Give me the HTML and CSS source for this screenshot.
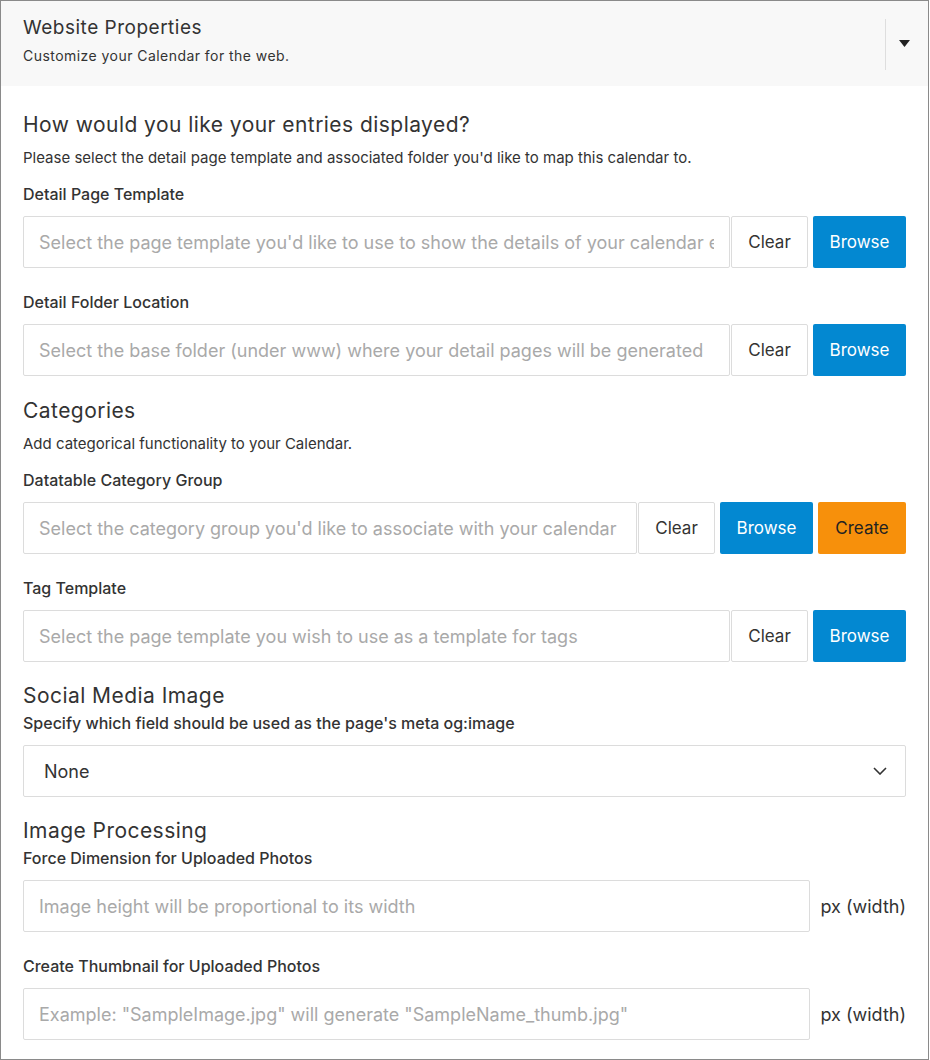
FILE: index.html
```html
<!DOCTYPE html>
<html>
<head>
<meta charset="utf-8">
<link rel="stylesheet" href="styles.css">
</head>
<body>
<div class="panel">
  <div class="panel-header">
    <div class="header-text">
      <div class="header-title">Website Properties</div>
      <div class="header-sub">Customize your Calendar for the web.</div>
    </div>
    <div class="header-toggle">
      <svg width="11" height="7" viewBox="0 0 11 7"><polygon points="0,0 11,0 5.5,7" fill="#222"/></svg>
    </div>
  </div>

  <div class="panel-body">
    <h2 class="section-title first">How would you like your entries displayed?</h2>
    <p class="section-desc">Please select the detail page template and associated folder you'd like to map this calendar to.</p>

    <label class="field-label">Detail Page Template</label>
    <div class="input-group">
      <div class="text-input placeholder"><span class="input-text">Select the page template you'd like to use to show the details of your calendar entries</span></div>
      <button class="btn btn-clear">Clear</button>
      <button class="btn btn-browse">Browse</button>
    </div>

    <label class="field-label spaced">Detail Folder Location</label>
    <div class="input-group">
      <div class="text-input placeholder"><span class="input-text">Select the base folder (under www) where your detail pages will be generated</span></div>
      <button class="btn btn-clear">Clear</button>
      <button class="btn btn-browse">Browse</button>
    </div>

    <h2 class="section-title mid">Categories</h2>
    <p class="section-desc">Add categorical functionality to your Calendar.</p>

    <label class="field-label">Datatable Category Group</label>
    <div class="input-group">
      <div class="text-input placeholder"><span class="input-text">Select the category group you'd like to associate with your calendar</span></div>
      <button class="btn btn-clear">Clear</button>
      <button class="btn btn-browse">Browse</button>
      <button class="btn btn-create">Create</button>
    </div>

    <label class="field-label spaced">Tag Template</label>
    <div class="input-group">
      <div class="text-input placeholder"><span class="input-text">Select the page template you wish to use as a template for tags</span></div>
      <button class="btn btn-clear">Clear</button>
      <button class="btn btn-browse">Browse</button>
    </div>

    <h2 class="section-title">Social Media Image</h2>
    <label class="field-label tight">Specify which field should be used as the page's meta og:image</label>
    <div class="select-box">
      <span>None</span>
      <svg width="14" height="8" viewBox="0 0 14 8"><polyline points="1,1 7,7 13,1" fill="none" stroke="#333" stroke-width="1.6"/></svg>
    </div>

    <h2 class="section-title sm">Image Processing</h2>
    <label class="field-label tight">Force Dimension for Uploaded Photos</label>
    <div class="input-group">
      <div class="text-input placeholder"><span class="input-text">Image height will be proportional to its width</span></div>
      <span class="unit">px (width)</span>
    </div>

    <label class="field-label spaced">Create Thumbnail for Uploaded Photos</label>
    <div class="input-group">
      <div class="text-input placeholder"><span class="input-text">Example: "SampleImage.jpg" will generate "SampleName_thumb.jpg"</span></div>
      <span class="unit">px (width)</span>
    </div>
  </div>
</div>
</body>
</html>
```

FILE: styles.css
```css
* { box-sizing: border-box; }

html, body {
  margin: 0;
  padding: 0;
  background: #fff;
}

body {
  font-family: Inter, "Noto Sans", sans-serif;
  color: #333;
}

.panel {
  width: 929px;
  height: 1060px;
  border: 1px solid #8a8a8a;
  overflow: hidden;
}

.panel-header {
  height: 85px;
  background: #f8f8f8;
  display: flex;
  align-items: center;
  padding-left: 22px;
}

.header-text {
  flex: 1;
  display: flex;
  flex-direction: column;
  margin-top: -6px;
}

.header-title {
  font-size: 19px;
  line-height: 24px;
  letter-spacing: 0.5px;
  color: #333;
}

.header-sub {
  font-size: 14px;
  line-height: 20px;
  margin-top: 6px;
  letter-spacing: 0.45px;
  color: #333;
}

.header-toggle {
  width: 43px;
  height: 51px;
  border-left: 1px solid #dedede;
  display: flex;
  align-items: center;
  justify-content: center;
  padding-right: 6px;
  padding-bottom: 2px;
  margin-top: 2px;
}

.panel-body {
  padding: 0 22px;
  display: flex;
  flex-direction: column;
}

.section-title {
  font-size: 21px;
  font-weight: 400;
  line-height: 28px;
  letter-spacing: 0.45px;
  margin: 20px 0 0;
  color: #333;
}

.section-title.first { margin-top: 25px; }
.section-title.mid { margin-top: 21px; }
.section-title.sm { margin-top: 20px; }

.section-desc {
  font-size: 15px;
  line-height: 20px;
  margin: 9px 0 0;
  color: #333;
}

.field-label {
  display: block;
  font-size: 16px;
  font-weight: 500;
  line-height: 20px;
  margin-top: 16px;
  margin-bottom: 12px;
  color: #333;
}

.field-label.spaced { margin-top: 24px; }
.field-label.tight { margin-top: 3px; }

.input-group {
  display: flex;
  align-items: center;
  height: 52px;
}

.text-input {
  flex: 1;
  min-width: 0;
  height: 52px;
  border: 1px solid #dcdcdc;
  border-radius: 2px;
  padding: 0 15px;
  display: flex;
  align-items: center;
  font-size: 18px;
}

.input-text {
  display: block;
  width: 100%;
  white-space: nowrap;
  overflow: hidden;
  text-overflow: clip;
}

.placeholder { color: #a9a9a9; }

.btn {
  height: 52px;
  border: none;
  border-radius: 2px;
  font-family: Inter, "Noto Sans", sans-serif;
  font-size: 17px;
  padding: 0;
  flex: none;
}

.btn-clear {
  width: 77px;
  margin-left: 1px;
  background: #fff;
  border: 1px solid #dcdcdc;
  color: #333;
}

.btn-browse {
  width: 93px;
  margin-left: 5px;
  background: #0388d1;
  color: #fff;
}

.btn-create {
  width: 88px;
  margin-left: 5px;
  background: #f7900b;
  color: #222;
}

.unit {
  width: 96px;
  text-align: right;
  font-size: 18px;
  color: #333;
  flex: none;
}

.select-box {
  height: 52px;
  border: 1px solid #dcdcdc;
  border-radius: 2px;
  display: flex;
  align-items: center;
  justify-content: space-between;
  padding: 0 18px 0 20px;
  font-size: 18px;
  color: #333;
}
```
